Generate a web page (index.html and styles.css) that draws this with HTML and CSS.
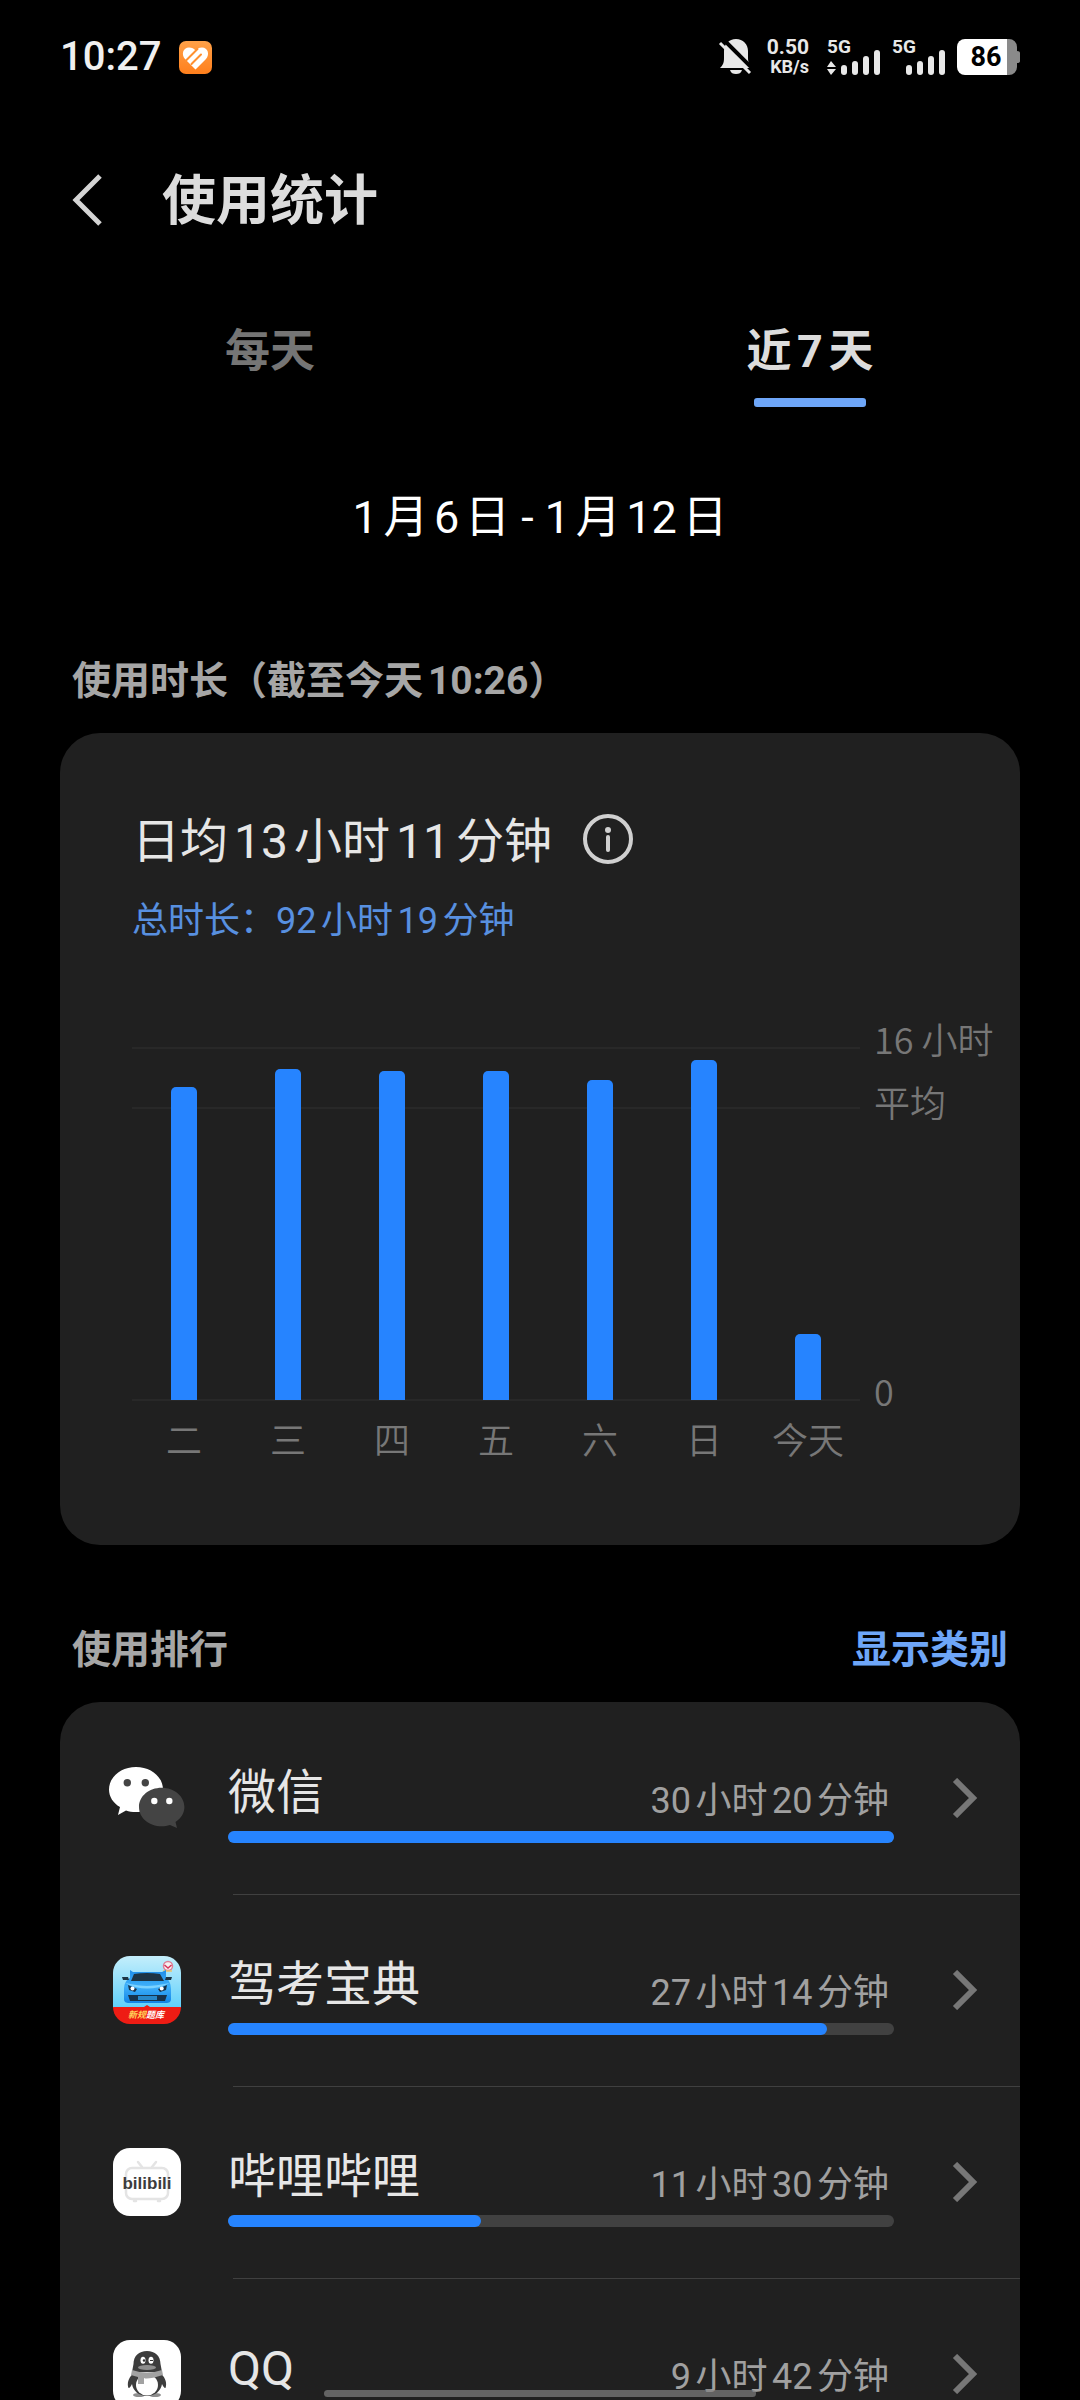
FILE: index.html
```html
<!DOCTYPE html>
<html lang="zh-CN">
<head>
<meta charset="utf-8">
<meta name="viewport" content="width=device-width, initial-scale=1">
<title>使用统计</title>
<link rel="stylesheet" href="styles.css">
</head>
<body>
<div class="screen">
  <div class="status">
    <span class="clock">10:27</span>
    <svg class="status-app" width="33" height="33" viewBox="0 0 33 33" aria-hidden="true">
      <defs><linearGradient id="orange" x1="0" y1="0" x2="0" y2="1"><stop offset="0" stop-color="#ffa148"/><stop offset="1" stop-color="#ff7f1c"/></linearGradient></defs>
      <rect width="33" height="33" rx="7" fill="url(#orange)"/>
      <path d="M16.500 28.500 L6 18 C2 13.500 4 6.500 10 6.500 C13 6.500 15 7.500 16.500 9.500 C18 7.500 20 6.500 23 6.500 C29 6.500 31 13.500 27 18 Z" fill="#fff"/>
      <path d="M7 19.500 L18.500 8 M12.500 23 L22 13.500" stroke="#ff9030" stroke-width="2" stroke-linecap="round"/>
    </svg>
    <div class="status-right">
      <svg width="34" height="38" viewBox="0 0 34 38" aria-hidden="true">
        <path d="M18 1 C25 1 30 6 30 13 V20 C30 25 32 27 34 30 H2 C5 27 6 25 6 20 V13 C6 6 11 1 18 1 Z M12 32 H24 C23 35 21 36 18 36 C15 36 13 35 12 32 Z" fill="#e8e8e8"/>
        <path d="M5 1 L37 33" stroke="#000" stroke-width="4"/>
        <path d="M2 5 L32 35" stroke="#e8e8e8" stroke-width="3"/>
      </svg>
      <div class="net"><span class="net-rate">0.50</span><span class="net-unit">KB/s</span></div>
      <svg class="signal" width="54" height="54" viewBox="0 -8 54 54" aria-hidden="true">
        <text class="signal-text" x="0" y="15">5G</text>
        <path d="M0 29 L4 23 L9 29 Z M0 31 H9 L4 37 Z"/>
        <rect x="14" y="27" width="6" height="10" rx="3"/><rect x="25" y="23" width="6" height="14" rx="3"/><rect x="36" y="18" width="6" height="19" rx="3"/><rect x="47" y="12" width="6" height="25" rx="3"/>
      </svg>
      <svg class="signal" width="54" height="54" viewBox="0 -8 54 54" aria-hidden="true">
        <text class="signal-text" x="0" y="15">5G</text>
        <rect x="14" y="27" width="6" height="10" rx="3"/><rect x="25" y="23" width="6" height="14" rx="3"/><rect x="36" y="18" width="6" height="19" rx="3"/><rect x="47" y="12" width="6" height="25" rx="3"/>
      </svg>
      <svg width="63" height="38" viewBox="0 0 63 38" role="img" aria-label="电量 86">
        <path d="M50 1 H52 A8 8 0 0 1 60 9 V13 Q63 13 63 15 V23 Q63 25 60 25 V29 A8 8 0 0 1 52 37 H50 Z" fill="#8a8a8a"/>
        <path d="M8 1 H50 V37 H8 A8 8 0 0 1 0 29 V9 A8 8 0 0 1 8 1 Z" fill="#fff"/>
        <text class="battery-text" x="29" y="28" text-anchor="middle">86</text>
      </svg>
    </div>
  </div>

  <header class="titlebar">
    <button class="back" type="button" aria-label="返回">
      <svg width="32" height="52" viewBox="0 0 32 52"><path d="M28 2 L4 26 L28 50" fill="none" stroke="#d4d4d4" stroke-width="5"/></svg>
    </button>
    <h1 class="title">使用统计</h1>
  </header>

  <nav class="tabs">
    <button class="tab" type="button">每天</button>
    <button class="tab tab-active" type="button">近7天</button>
  </nav>

  <main class="content">
    <p class="range">1月6日 - 1月12日</p>

    <div class="section-head"><h2 class="section-title">使用时长（截至今天10:26）</h2></div>
    <section class="card usage">
      <div class="average">
        <span>日均13小时11分钟</span>
        <button class="info" type="button" aria-label="说明">
          <svg width="52" height="52" viewBox="0 0 52 52"><circle cx="26" cy="26" r="23" fill="none" stroke="#d0d0d0" stroke-width="4"/><circle cx="26" cy="17" r="3" fill="#d0d0d0"/><path d="M26 24 V37" stroke="#d0d0d0" stroke-width="4" stroke-linecap="round"/></svg>
        </button>
      </div>
      <p class="total">总时长：92小时19分钟</p>
      <div class="chart">
        <div class="plot">
          <div class="line line-max"></div>
          <div class="line line-avg"></div>
          <div class="line line-zero"></div>
          <div class="bar" style="height:89%"></div>
          <div class="bar" style="height:94%"></div>
          <div class="bar" style="height:93.500%"></div>
          <div class="bar" style="height:93.500%"></div>
          <div class="bar" style="height:91%"></div>
          <div class="bar" style="height:96.600%"></div>
          <div class="bar" style="height:18.800%"></div>
        </div>
        <div class="axis">
          <span class="tick tick-max">16 小时</span>
          <span class="tick tick-avg">平均</span>
          <span class="tick tick-zero">0</span>
        </div>
        <div class="days"><span>二</span><span>三</span><span>四</span><span>五</span><span>六</span><span>日</span><span>今天</span></div>
      </div>
    </section>

    <div class="section-head section-rank">
      <h2 class="section-title">使用排行</h2>
      <a class="section-link" href="#categories">显示类别</a>
    </div>
    <ul class="card ranking">
      <li class="item"><a class="row" href="#wechat">
        <svg class="app" viewBox="0 0 76 76" aria-hidden="true">
          <path d="M27 7 C42 7 54 17 54 29.500 C54 42 42 52 27 52 C23 52 20 51.500 17 50.500 L9 55 L11 47 C4 43 0 36.500 0 29.500 C0 17 12 7 27 7 Z" fill="#fff"/>
          <circle cx="18.300" cy="22.700" r="3.700" fill="#444"/><circle cx="36.300" cy="22.700" r="3.700" fill="#444"/>
          <path d="M52.700 27.700 C65 27.700 75.400 36 75.400 47 C75.400 53 72 58.500 66.500 62 L68 68 L61 65 C58 66 56 66.300 52.700 66.300 C40 66.300 30 58 30 47 C30 36 40 27.700 52.700 27.700 Z" fill="#444"/>
          <circle cx="45.300" cy="41" r="3.200" fill="#fff"/><circle cx="60.300" cy="41" r="3.200" fill="#fff"/>
        </svg>
        <span class="body">
          <span class="labels"><span class="name">微信</span><span class="time">30小时20分钟</span></span>
          <span class="track"><span class="fill" style="width:100%"></span></span>
        </span>
        <svg class="chevron" viewBox="0 0 26 40" aria-hidden="true"><path d="M3 2 L21 20 L3 38"/></svg>
      </a></li>
      <li class="item"><a class="row" href="#jiakao">
        <svg class="app" viewBox="0 0 76 76" aria-hidden="true">
          <defs>
            <linearGradient id="sky" x1="0" y1="0" x2="0" y2="1"><stop offset="0" stop-color="#c4eefb"/><stop offset="1" stop-color="#5fd0fb"/></linearGradient>
            <linearGradient id="paint" x1="0" y1="0" x2="0" y2="1"><stop offset="0" stop-color="#1e8de8"/><stop offset="0.500" stop-color="#3fb0fa"/><stop offset="1" stop-color="#1285e6"/></linearGradient>
            <clipPath id="tile"><rect x="4" y="4" width="68" height="68" rx="17"/></clipPath>
          </defs>
          <g clip-path="url(#tile)">
            <rect x="4" y="4" width="68" height="52" fill="url(#sky)"/>
            <path d="M4 55 H35 L38 53 L41 55 H72 V72 H4 Z" fill="#ee1c14"/>
          </g>
          <circle cx="59" cy="14" r="4.500" fill="#f6f1f1" stroke="#dd7f99" stroke-width="1.500"/>
          <path d="M55.500 13 L59 16 L62.500 13" fill="none" stroke="#d8345c" stroke-width="1.500"/>
          <path d="M54 19 H63" stroke="#e9c56d" stroke-width="1.500"/>
          <path d="M21 18 L24 20 H53 L57 18 V26 C60 28 62 32 62 37 V47 C62 50 60 51 57 51 H20 C17 51 15 50 15 47 V37 C15 32 17 28 21 26 Z" fill="url(#paint)"/>
          <path d="M25 22 Q38 20 51 22 L55 29 H22 Z" fill="#1d3444"/>
          <path d="M13 25 H19 L20 28 H14 Z M63 25 H57 L56 28 H62 Z" fill="#1d3444"/>
          <path d="M16 31 Q38 42 61 31 Q46 34 38 34 Q30 34 16 31 Z" fill="#7bd2ff"/>
          <path d="M19 33 L28 37 L26 40 L20 38 Z M58 33 L49 37 L51 40 L57 38 Z" fill="#17324a"/>
          <circle cx="23.500" cy="36.500" r="2" fill="#fff"/><circle cx="52.700" cy="36.500" r="2" fill="#fff"/>
          <path d="M19 43 H58 L56 49 H21 Z" fill="#17324a"/><rect x="29" y="44" width="19" height="4" fill="#2787c9"/>
          <text class="ribbon" x="19" y="66"><tspan fill="#ffd25a">新规</tspan><tspan fill="#fff">题库</tspan></text>
        </svg>
        <span class="body">
          <span class="labels"><span class="name">驾考宝典</span><span class="time">27小时14分钟</span></span>
          <span class="track"><span class="fill" style="width:90%"></span></span>
        </span>
        <svg class="chevron" viewBox="0 0 26 40" aria-hidden="true"><path d="M3 2 L21 20 L3 38"/></svg>
      </a></li>
      <li class="item"><a class="row" href="#bilibili">
        <svg class="app" viewBox="0 0 76 76" aria-hidden="true">
          <rect x="4" y="4" width="68" height="68" rx="17" fill="#fff"/>
          <g fill="none" stroke="#e4e4e4" stroke-width="2.500" stroke-linecap="round"><rect x="17" y="24" width="42" height="31" rx="6"/><path d="M29 18 L33 23 M47 18 L43 23 M25 57 H27 M49 57 H51"/></g>
          <text class="bili" x="38" y="45" text-anchor="middle">bilibili</text>
        </svg>
        <span class="body">
          <span class="labels"><span class="name">哔哩哔哩</span><span class="time">11小时30分钟</span></span>
          <span class="track"><span class="fill" style="width:38%"></span></span>
        </span>
        <svg class="chevron" viewBox="0 0 26 40" aria-hidden="true"><path d="M3 2 L21 20 L3 38"/></svg>
      </a></li>
      <li class="item"><a class="row" href="#qq">
        <svg class="app" viewBox="0 0 76 76" aria-hidden="true">
          <rect x="4" y="4" width="68" height="68" rx="17" fill="#fff"/>
          <ellipse cx="30" cy="59" rx="6" ry="2" fill="#8e8e8e"/><ellipse cx="46" cy="59" rx="6" ry="2" fill="#8e8e8e"/>
          <path d="M24 38 C19 42 18 48 19.500 52 C21 52 22 50 23 48 C24 55 30 60 38 60 C46 60 52 55 53 48 C54 50 55 52 56.500 52 C58 48 57 42 52 38 Z" fill="#3d3d3d"/>
          <ellipse cx="38" cy="49" rx="11" ry="10.500" fill="#fff"/>
          <path d="M38 15 C46 15 51.500 20 51.500 28 L53 36 H23 L24.500 28 C24.500 20 30 15 38 15 Z" fill="#3d3d3d"/>
          <ellipse cx="34" cy="24.300" rx="2.500" ry="3.500" fill="#fff"/><ellipse cx="42" cy="24.300" rx="2.500" ry="3.500" fill="#fff"/>
          <circle cx="35" cy="24.500" r="1.200" fill="#333"/><path d="M41 24.500 H44" stroke="#333"/>
          <ellipse cx="38" cy="31.500" rx="9" ry="2.500" fill="#8e8e8e"/>
          <path d="M23 34 Q38 39 53 34 L54 39 Q38 44 35 42 V48 H29 V41 Q25 40 22 39 Z" fill="#a2a2a2"/>
        </svg>
        <span class="body">
          <span class="labels"><span class="name">QQ</span><span class="time">9小时42分钟</span></span>
          <span class="track"><span class="fill" style="width:32%"></span></span>
        </span>
        <svg class="chevron" viewBox="0 0 26 40" aria-hidden="true"><path d="M3 2 L21 20 L3 38"/></svg>
      </a></li>
    </ul>
  </main>
  <div class="home-indicator"></div>
</div>
</body>
</html>
```

FILE: styles.css
```css
* { box-sizing: border-box; }

body {
  margin: 0;
  background: #000;
  color: #e6e6e6;
  font-family: Roboto, "Noto Sans CJK SC", sans-serif;
  text-autospace: normal;
}

h1, h2, p, ul { margin: 0; padding: 0; }
ul { list-style: none; }
a { color: inherit; text-decoration: none; }
svg { display: block; flex: none; }
button {
  border: 0;
  padding: 0;
  background: none;
  color: inherit;
  font: inherit;
}

.screen {
  height: 100vh;
  display: flex;
  flex-direction: column;
  overflow: hidden;
}

/* status bar */
.status {
  flex: none;
  display: flex;
  align-items: center;
  height: 114px;
  padding: 0 60px;
}
.clock { font-size: 40px; font-weight: 500; line-height: 48px; color: #f0f0f0; }
.status-app { margin-left: 18px; }
.status-right { display: flex; align-items: center; gap: 11px; margin-left: auto; }
.net {
  display: flex;
  flex-direction: column;
  align-items: flex-end;
  margin: 0 7px 0 4px;
  font-weight: 700;
  line-height: 20px;
  color: #e8e8e8;
}
.net-rate { font-size: 21px; }
.net-unit { font-size: 18px; }
.signal { fill: #e8e8e8; }
.signal-text { font-size: 19px; font-weight: 700; }
.battery-text { font-size: 27px; font-weight: 700; fill: #000; }

/* title and tabs */
.titlebar {
  flex: none;
  display: flex;
  align-items: center;
  gap: 58px;
  height: 172px;
  padding: 0 72px;
}
.title { padding-top: 4px; font-size: 54px; font-weight: 700; line-height: 80px; color: #dcdcdc; }
.tabs { flex: none; display: grid; grid-template-columns: 1fr 1fr; padding-top: 34px; }
.tab {
  display: flex;
  flex-direction: column;
  align-items: center;
  gap: 14px;
  font-size: 45px;
  font-weight: 700;
  line-height: 64px;
  color: #757575;
}
.tab::after { content: ""; width: 112px; height: 9px; border-radius: 3px; }
.tab-active { color: #dcdcdc; }
.tab-active::after { background: #6ea6f8; }

.content { flex: 1; min-height: 0; overflow: hidden; padding: 0 60px; }
.range {
  margin-top: 79px;
  text-align: center;
  font-size: 45px;
  line-height: 64px;
  color: #fff;
}

.section-head {
  display: flex;
  justify-content: space-between;
  margin: 103px 12px 24px;
  font-size: 39px;
  line-height: 56px;
}
.section-rank { margin-top: 77px; }
.section-title { font-size: inherit; font-weight: 700; color: #a6a6a6; }
.section-link { font-weight: 700; color: #6ea6f8; }

.card { border-radius: 40px; background: #202020; }

/* usage chart */
.usage { padding: 77px 0 83px 72px; }
.average {
  display: flex;
  align-items: center;
  gap: 30px;
  font-size: 48px;
  line-height: 64px;
}
.info { padding-bottom: 6px; }
.total { margin-top: 23px; font-size: 36px; line-height: 48px; color: #5890e0; }
.chart {
  display: grid;
  grid-template-columns: 1fr 146px;
  column-gap: 14px;
  row-gap: 14px;
  margin-top: 103px;
  font-size: 36px;
  font-weight: 350;
  line-height: 48px;
  color: #777;
  font-family: "Noto Sans CJK SC", sans-serif;
}
.plot {
  position: relative;
  display: flex;
  align-items: flex-end;
  justify-content: space-around;
  height: 352px;
}
.line { position: absolute; left: 0; right: 0; height: 2px; margin-top: -1px; background: #282828; }
.line-max { top: 0; }
.line-avg { top: 17%; }
.line-zero { top: 100%; }
.bar { position: relative; width: 26px; border-radius: 5px 5px 0 0; background: #2684ff; }
.axis { position: relative; }
.tick { position: absolute; left: 0; margin-top: -34px; white-space: nowrap; }
.tick-max { top: 0; }
.tick-avg { top: 18%; }
.tick-zero { top: 100%; }
.days { display: grid; grid-template-columns: repeat(7, 1fr); text-align: center; }

/* ranking list */
.item + .item::before {
  content: "";
  display: block;
  height: 1px;
  margin: 0 0 -1px 173px;
  background: #404040;
}
.row { display: flex; align-items: center; height: 192px; padding: 0 42px 0 49px; }
.app { width: 76px; height: 76px; margin-right: 43px; }
.body { flex: 1; display: flex; flex-direction: column; gap: 6px; padding-top: 8px; }
.labels { display: flex; justify-content: space-between; align-items: flex-end; padding-right: 5px; }
.name { font-size: 48px; line-height: 64px; }
.time { font-size: 36px; line-height: 48px; color: #a0a0a0; }
.track { display: flex; height: 12px; border-radius: 6px; background: #414141; }
.fill { border-radius: 6px; background: #2684ff; }
.chevron {
  width: 26px;
  height: 40px;
  margin-left: 58px;
  fill: none;
  stroke: #777;
  stroke-width: 6px;
}
.ribbon { font-size: 9px; font-weight: 700; font-style: italic; }
.bili {
  font-family: "Liberation Sans Narrow", "Liberation Sans", sans-serif;
  font-size: 17px;
  font-weight: 700;
  fill: #3c3c3c;
}

.home-indicator {
  position: fixed;
  bottom: 3px;
  left: 30%;
  right: 30%;
  height: 7px;
  border-radius: 4px;
  background: rgba(128, 128, 128, 0.7);
}
```
